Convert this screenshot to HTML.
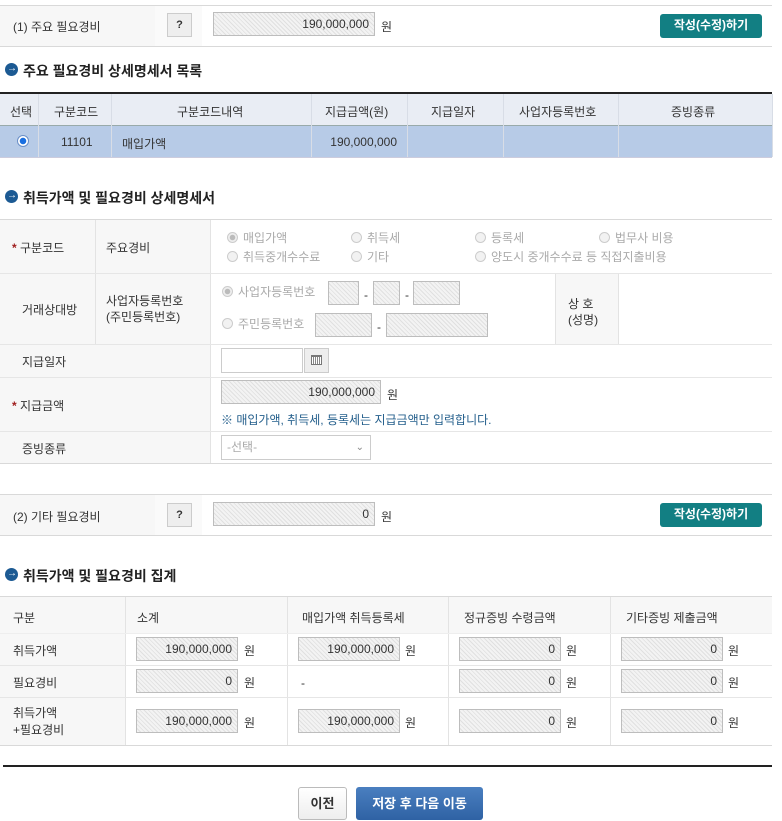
<!DOCTYPE html>
<html><head><meta charset="utf-8">
<style>
*{box-sizing:border-box;margin:0;padding:0}
body{width:782px;height:821px;background:#fff;font-family:"Liberation Sans","Noto Sans CJK KR",sans-serif;font-size:12px;color:#333;position:relative;overflow:hidden}
.a{position:absolute}
.hl{position:absolute;height:1px;background:#d9d9d9}
.vl{position:absolute;width:1px;background:#e3e3e3}
.g{position:absolute;background:#f7f7f7}
.inp{position:absolute;border:1px solid #bdbdbd;background:repeating-linear-gradient(45deg,#f3f3f3 0 2px,#e0e0e0 2px 3px);text-align:right;padding-right:5px;font-size:12px;color:#333;line-height:22px;height:24px}
.t{position:absolute;white-space:nowrap}
.btn{position:absolute;background:#127f83;color:#fff;font-weight:bold;font-size:12px;text-align:center;border-radius:3px;line-height:23px;height:24px;width:102px}
.q{position:absolute;width:25px;height:24px;border:1px solid #ccc;background:#eee;text-align:center;line-height:22px;font-weight:bold;font-size:11px}
.h{position:absolute;font-size:14px;font-weight:bold;color:#222;padding-left:18px;white-space:nowrap}
.h:before{content:"";position:absolute;left:0;top:2px;width:13px;height:13px;border-radius:50%;background:#1c5a93}
.h:after{content:"→";position:absolute;left:2px;top:0px;font-size:10px;color:#fff;line-height:16px}
.rad{display:inline-block;width:11px;height:11px;border:1px solid #ccc;border-radius:50%;background:#f2f2f2;vertical-align:-1px;margin-right:5px}
.rad.on{background:radial-gradient(#bbb 0 2.5px,#eee 3px)}
.gt{color:#aaa}
.star{color:#a02020;font-weight:bold}
</style></head><body>

<div class="hl" style="left:0;top:5px;width:772px"></div>
<div class="g" style="left:0;top:6px;width:155px;height:40px"></div>
<div class="g" style="left:155px;top:6px;width:47px;height:40px;background:#fafafa"></div>
<div class="hl" style="left:0;top:46px;width:772px"></div>
<div class="t" style="left:13px;top:18px">(1) 주요 필요경비</div>
<div class="q" style="left:167px;top:13px">?</div>
<div class="inp" style="left:213px;top:12px;width:162px">190,000,000</div>
<div class="t" style="left:381px;top:18px">원</div>
<div class="btn" style="left:660px;top:14px">작성(수정)하기</div>

<div class="h" style="left:5px;top:61px">주요 필요경비 상세명세서 목록</div>

<div class="a" style="left:0;top:92px;width:772px;height:2px;background:#222"></div>
<div class="a" style="left:0;top:94px;width:772px;height:31px;background:#e9edf4"></div>
<div class="a" style="left:0;top:125px;width:772px;height:1px;background:#9aa"></div>
<div class="a" style="left:0;top:126px;width:772px;height:31px;background:#b7cbe7"></div>
<div class="a" style="left:0;top:157px;width:772px;height:1px;background:#ccd"></div>
<div class="vl" style="left:38px;top:94px;height:63px;background:#d8dde6"></div>
<div class="vl" style="left:111px;top:94px;height:63px;background:#d8dde6"></div>
<div class="vl" style="left:311px;top:94px;height:63px;background:#d8dde6"></div>
<div class="vl" style="left:407px;top:94px;height:63px;background:#d8dde6"></div>
<div class="vl" style="left:503px;top:94px;height:63px;background:#d8dde6"></div>
<div class="vl" style="left:618px;top:94px;height:63px;background:#d8dde6"></div>
<div class="vl" style="left:772px;top:94px;height:63px;background:#d8dde6"></div>
<div class="t" style="left:10px;top:103px">선택</div>
<div class="t" style="left:54px;top:103px">구분코드</div>
<div class="t" style="left:177px;top:103px">구분코드내역</div>
<div class="t" style="left:325px;top:103px">지급금액(원)</div>
<div class="t" style="left:431px;top:103px">지급일자</div>
<div class="t" style="left:519px;top:103px">사업자등록번호</div>
<div class="t" style="left:671px;top:103px">증빙종류</div>
<div class="a" style="left:17px;top:135px;width:12px;height:12px;border-radius:50%;border:1px solid #6a8fc7;background:radial-gradient(#1a6fe0 0 3px,#fff 3.5px)"></div>
<div class="t" style="left:61px;top:135px">11101</div>
<div class="t" style="left:122px;top:135px">매입가액</div>
<div class="t" style="left:311px;width:86px;text-align:right;top:135px">190,000,000</div>

<div class="h" style="left:5px;top:188px">취득가액 및 필요경비 상세명세서</div>

<div class="hl" style="left:0;top:219px;width:772px"></div>
<div class="g" style="left:0;top:220px;width:210px;height:243px"></div>
<div class="vl" style="left:95px;top:220px;height:124px"></div>
<div class="vl" style="left:210px;top:220px;height:243px"></div>
<div class="g" style="left:555px;top:274px;width:63px;height:70px"></div>
<div class="vl" style="left:555px;top:274px;height:70px"></div>
<div class="vl" style="left:618px;top:274px;height:70px"></div>
<div class="hl" style="left:0;top:273px;width:772px;background:#e6e6e6"></div>
<div class="hl" style="left:0;top:344px;width:772px;background:#e6e6e6"></div>
<div class="hl" style="left:0;top:377px;width:772px;background:#e6e6e6"></div>
<div class="hl" style="left:0;top:431px;width:772px;background:#e6e6e6"></div>
<div class="hl" style="left:0;top:463px;width:772px"></div>

<div class="t" style="left:12px;top:239px"><span class="star">*</span> 구분코드</div>
<div class="t" style="left:106px;top:239px">주요경비</div>
<div class="t gt" style="left:227px;top:229px"><span class="rad on"></span>매입가액</div>
<div class="t gt" style="left:351px;top:229px"><span class="rad"></span>취득세</div>
<div class="t gt" style="left:475px;top:229px"><span class="rad"></span>등록세</div>
<div class="t gt" style="left:599px;top:229px"><span class="rad"></span>법무사 비용</div>
<div class="t gt" style="left:227px;top:248px"><span class="rad"></span>취득중개수수료</div>
<div class="t gt" style="left:351px;top:248px"><span class="rad"></span>기타</div>
<div class="t gt" style="left:475px;top:248px"><span class="rad"></span>양도시 중개수수료 등 직접지출비용</div>

<div class="t" style="left:22px;top:301px">거래상대방</div>
<div class="t" style="left:106px;top:293px;line-height:16px">사업자등록번호<br>(주민등록번호)</div>
<div class="t gt" style="left:222px;top:283px"><span class="rad on"></span>사업자등록번호</div>
<div class="inp" style="left:328px;top:281px;width:31px"></div>
<div class="t" style="left:364px;top:288px">-</div>
<div class="inp" style="left:373px;top:281px;width:27px"></div>
<div class="t" style="left:405px;top:288px">-</div>
<div class="inp" style="left:413px;top:281px;width:47px"></div>
<div class="t gt" style="left:222px;top:315px"><span class="rad"></span>주민등록번호</div>
<div class="inp" style="left:315px;top:313px;width:57px"></div>
<div class="t" style="left:377px;top:320px">-</div>
<div class="inp" style="left:386px;top:313px;width:102px"></div>
<div class="t" style="left:568px;top:296px;line-height:16px">상 호<br>(성명)</div>

<div class="t" style="left:22px;top:353px">지급일자</div>
<div class="a" style="left:221px;top:348px;width:82px;height:25px;border:1px solid #ccc;background:#fff"></div>
<div class="a" style="left:304px;top:348px;width:25px;height:25px;border:1px solid #ccc;background:#eee"></div>
<div class="a" style="left:311px;top:355px;width:11px;height:10px;border:1px solid #777;border-top-width:2px;background:repeating-linear-gradient(90deg,#fff 0 1px,#888 1px 2px)"></div>

<div class="t" style="left:12px;top:397px"><span class="star">*</span> 지급금액</div>
<div class="inp" style="left:221px;top:380px;width:160px">190,000,000</div>
<div class="t" style="left:387px;top:386px">원</div>
<div class="t" style="left:221px;top:411px;color:#245f8c">※ 매입가액, 취득세, 등록세는 지급금액만 입력합니다.</div>

<div class="t" style="left:22px;top:440px">증빙종류</div>
<div class="a" style="left:221px;top:435px;width:150px;height:25px;border:1px solid #ccc;background:#fff;color:#aaa;padding-left:5px;line-height:23px">-선택-<span style="position:absolute;right:6px;color:#888;font-size:10px">⌄</span></div>

<div class="hl" style="left:0;top:494px;width:772px"></div>
<div class="g" style="left:0;top:495px;width:155px;height:40px"></div>
<div class="g" style="left:155px;top:495px;width:47px;height:40px;background:#fafafa"></div>
<div class="hl" style="left:0;top:535px;width:772px"></div>
<div class="t" style="left:13px;top:508px">(2) 기타 필요경비</div>
<div class="q" style="left:167px;top:503px">?</div>
<div class="inp" style="left:213px;top:502px;width:162px">0</div>
<div class="t" style="left:381px;top:508px">원</div>
<div class="btn" style="left:660px;top:503px">작성(수정)하기</div>

<div class="h" style="left:5px;top:566px">취득가액 및 필요경비 집계</div>

<div class="hl" style="left:0;top:596px;width:772px"></div>
<div class="g" style="left:0;top:597px;width:772px;height:36px"></div>
<div class="g" style="left:0;top:633px;width:125px;height:112px"></div>
<div class="vl" style="left:125px;top:597px;height:148px"></div>
<div class="vl" style="left:287px;top:597px;height:148px"></div>
<div class="vl" style="left:448px;top:597px;height:148px"></div>
<div class="vl" style="left:610px;top:597px;height:148px"></div>
<div class="hl" style="left:0;top:633px;width:772px;background:#eee"></div>
<div class="hl" style="left:0;top:665px;width:772px;background:#e6e6e6"></div>
<div class="hl" style="left:0;top:697px;width:772px;background:#e6e6e6"></div>
<div class="hl" style="left:0;top:745px;width:772px"></div>
<div class="t" style="left:13px;top:609px">구분</div>
<div class="t" style="left:137px;top:609px">소계</div>
<div class="t" style="left:302px;top:609px">매입가액 취득등록세</div>
<div class="t" style="left:464px;top:609px">정규증빙 수령금액</div>
<div class="t" style="left:626px;top:609px">기타증빙 제출금액</div>

<div class="t" style="left:13px;top:642px">취득가액</div>
<div class="t" style="left:13px;top:674px">필요경비</div>
<div class="t" style="left:13px;top:705px;line-height:17px">취득가액<br>+필요경비</div>

<div class="inp" style="left:136px;top:637px;width:102px">190,000,000</div><div class="t" style="left:244px;top:642px">원</div>
<div class="inp" style="left:298px;top:637px;width:102px">190,000,000</div><div class="t" style="left:405px;top:642px">원</div>
<div class="inp" style="left:459px;top:637px;width:102px">0</div><div class="t" style="left:566px;top:642px">원</div>
<div class="inp" style="left:621px;top:637px;width:102px">0</div><div class="t" style="left:728px;top:642px">원</div>

<div class="inp" style="left:136px;top:669px;width:102px">0</div><div class="t" style="left:244px;top:674px">원</div>
<div class="t" style="left:301px;top:676px">-</div>
<div class="inp" style="left:459px;top:669px;width:102px">0</div><div class="t" style="left:566px;top:674px">원</div>
<div class="inp" style="left:621px;top:669px;width:102px">0</div><div class="t" style="left:728px;top:674px">원</div>

<div class="inp" style="left:136px;top:709px;width:102px">190,000,000</div><div class="t" style="left:244px;top:714px">원</div>
<div class="inp" style="left:298px;top:709px;width:102px">190,000,000</div><div class="t" style="left:405px;top:714px">원</div>
<div class="inp" style="left:459px;top:709px;width:102px">0</div><div class="t" style="left:566px;top:714px">원</div>
<div class="inp" style="left:621px;top:709px;width:102px">0</div><div class="t" style="left:728px;top:714px">원</div>

<div class="a" style="left:3px;top:765px;width:769px;height:2px;background:#222"></div>

<div class="a" style="left:298px;top:787px;width:49px;height:33px;border:1px solid #bbb;border-radius:3px;background:linear-gradient(#fff,#eee);text-align:center;line-height:31px;font-weight:bold;font-size:13px">이전</div>
<div class="a" style="left:356px;top:787px;width:127px;height:33px;border-radius:3px;background:linear-gradient(#4a7fc0,#2f62a4);color:#fff;text-align:center;line-height:33px;font-weight:bold;font-size:13px">저장 후 다음 이동</div>
</body></html>
